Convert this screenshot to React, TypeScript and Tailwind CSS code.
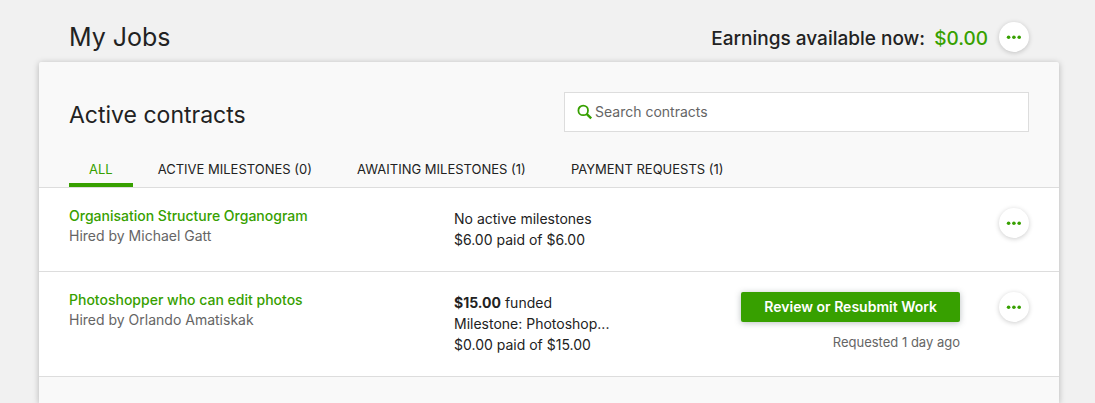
import { useState } from "react";

const tabs = [
    "ALL",
    "ACTIVE MILESTONES (0)",
    "AWAITING MILESTONES (1)",
    "PAYMENT REQUESTS (1)",
];

const contracts = [
    {
        title: "Organisation Structure Organogram",
        client: "Michael Gatt",
        funded: "",
        status: "No active milestones",
        paid: "$6.00 paid of $6.00",
        action: "",
        note: "",
    },
    {
        title: "Photoshopper who can edit photos",
        client: "Orlando Amatiskak",
        funded: "$15.00",
        status: "Milestone: Photoshop...",
        paid: "$0.00 paid of $15.00",
        action: "Review or Resubmit Work",
        note: "Requested 1 day ago",
    },
];

function MoreButton({ label }: { label: string }) {
    return (
        <button
            type="button"
            aria-label={label}
            className="flex size-[30px] shrink-0 items-center justify-center rounded-full bg-white text-[#37a000] shadow-[0_1px_5px_rgba(0,0,0,0.2)]"
        >
            <svg viewBox="0 0 16 4" className="h-1 w-4" fill="currentColor" aria-hidden="true">
                <circle cx="2.6" cy="2.2" r="1.8" />
                <circle cx="7.9" cy="2.2" r="1.8" />
                <circle cx="13.2" cy="2.2" r="1.8" />
            </svg>
        </button>
    );
}

export default function App() {
    const [activeTab, setActiveTab] = useState(tabs[0]);
    const [query, setQuery] = useState("");

    return (
        <div className="flex min-h-screen flex-col bg-[#f1f1f1] pr-9 pl-[39px] font-['Inter',sans-serif] text-[13px] text-[#222]">
            <header className="flex items-center justify-between px-[30px] pt-[21px] pb-[7px]">
                <h1 className="pb-[2px] text-[25px] leading-8">My Jobs</h1>
                <div className="flex items-center">
                    <p className="pt-[2px] text-[19px] leading-8 font-medium">
                        Earnings available now: <span className="pl-1 text-[#37a000]">$0.00</span>
                    </p>
                    <div className="pb-[2px] pl-[11px]">
                        <MoreButton label="Earnings options" />
                    </div>
                </div>
            </header>

            <main className="flex flex-1 flex-col rounded-t-[2px] bg-[#f9f9f9] shadow-[0_1px_6px_rgba(0,0,0,0.25)]">
                <div className="flex items-center justify-between px-[30px] pt-[30px]">
                    <h2 className="pt-[6px] text-[23px] leading-8">Active contracts</h2>
                    <label className="flex h-10 w-[465px] items-center border border-[#ddd] bg-white px-3">
                        <svg viewBox="0 0 16 16" className="size-4 shrink-0 text-[#37a000]" fill="none" stroke="currentColor" aria-hidden="true">
                            <circle cx="6.2" cy="6.4" r="4.8" strokeWidth="1.8" />
                            <path d="M9.6 9.8 14.2 14.4" strokeWidth="2.4" />
                        </svg>
                        <input
                            type="text"
                            aria-label="Search contracts"
                            placeholder="Search contracts"
                            value={query}
                            onChange={(e) => setQuery(e.target.value)}
                            className="w-full min-w-0 pl-[2px] text-sm outline-none placeholder:text-[#656565]"
                        />
                    </label>
                </div>

                <nav className="flex gap-[5px] border-b border-[#ddd] px-[30px] pt-5">
                    {tabs.map((tab) => (
                        <button
                            key={tab}
                            type="button"
                            onClick={() => setActiveTab(tab)}
                            className={
                                tab === activeTab
                                    ? "h-[35px] border-b-4 border-[#37a000] px-5 pt-1 text-[#37a000]"
                                    : "h-[35px] border-b-4 border-transparent px-5 pt-1"
                            }
                        >
                            {tab}
                        </button>
                    ))}
                </nav>

                <ul className="bg-white">
                    {contracts.map((contract) => (
                        <li
                            key={contract.title}
                            className="grid grid-cols-[385px_1fr_auto_30px] border-b border-[#ddd] px-[30px] pt-[18px] pb-[21px]"
                        >
                            <div className="text-sm leading-5">
                                <a href="#" className="font-medium text-[#37a000]">{contract.title}</a>
                                <p className="text-[#656565]">Hired by {contract.client}</p>
                            </div>
                            <div className="pt-[2px] text-sm leading-[21px]">
                                {contract.funded && (
                                    <p><strong className="font-bold">{contract.funded}</strong> funded</p>
                                )}
                                <p>{contract.status}</p>
                                <p>{contract.paid}</p>
                            </div>
                            <div className="flex flex-col items-end pt-[2px] pr-[39px]">
                                {contract.action && (
                                    <button
                                        type="button"
                                        className="h-[30px] rounded-[2px] bg-[#37a000] px-[23px] text-sm font-semibold text-white shadow-[0_1px_6px_rgba(57,73,76,0.35)]"
                                    >
                                        {contract.action}
                                    </button>
                                )}
                                {contract.note && (
                                    <p className="pt-[10px] leading-5 text-[#656565]">{contract.note}</p>
                                )}
                            </div>
                            <div className="pt-[2px]">
                                <MoreButton label={`Options for ${contract.title}`} />
                            </div>
                        </li>
                    ))}
                </ul>
            </main>
        </div>
    );
}
